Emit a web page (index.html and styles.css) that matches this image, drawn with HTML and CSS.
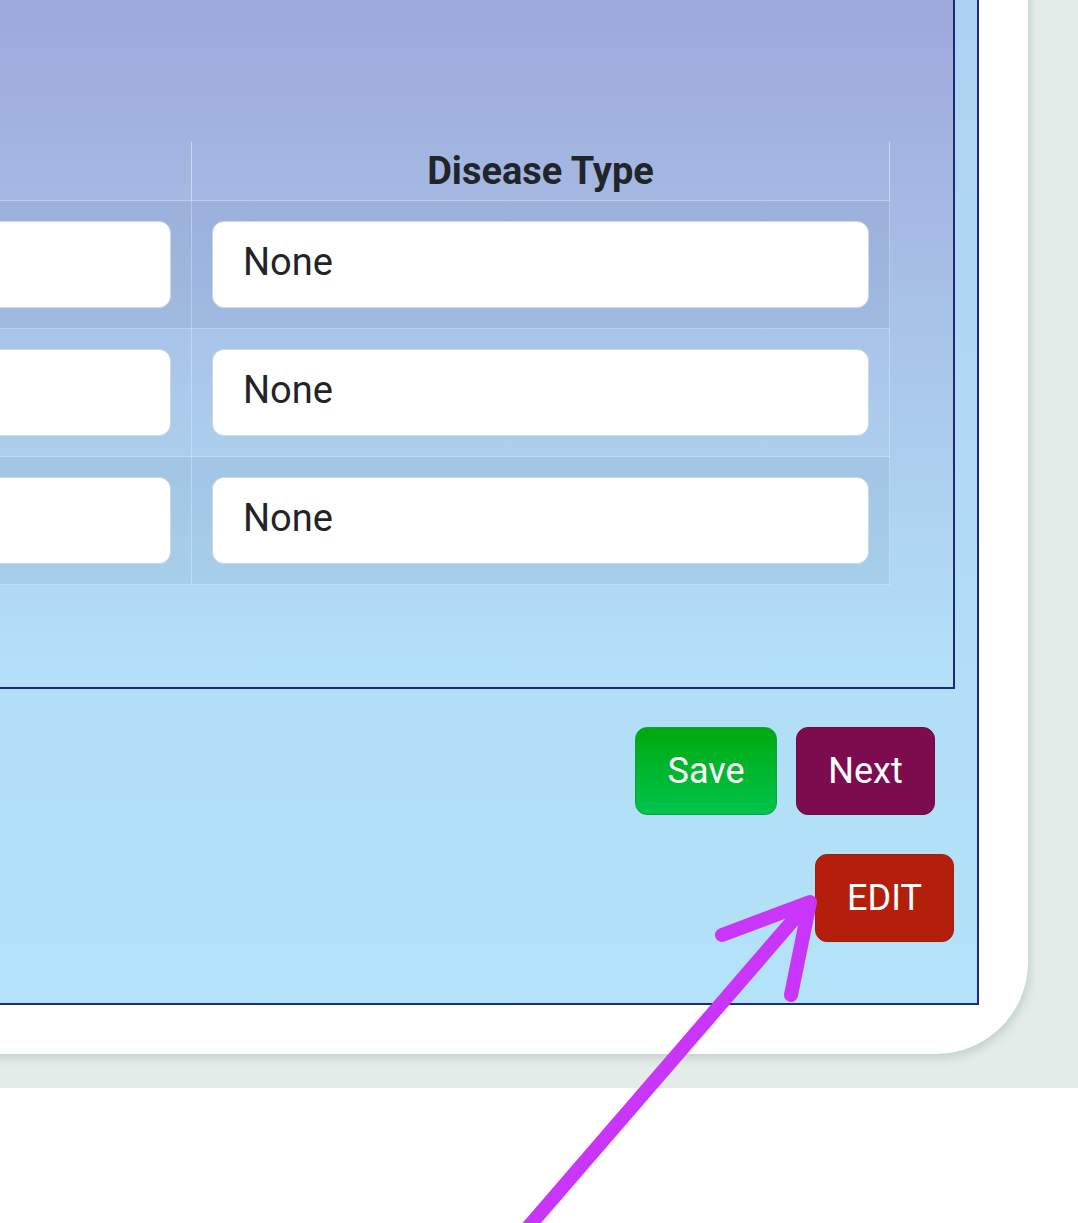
FILE: index.html
```html
<!DOCTYPE html>
<html>
<head>
    <title>Patient Diseases</title>
    <link rel="stylesheet" href="styles.css">
</head>
<body>
    <div class="page">
        <div class="screen">
            <div class="card">
                <div class="outer">
                    <div class="inner">
                        <table class="grid">
                            <colgroup>
                                <col>
                                <col class="col-type">
                            </colgroup>
                            <thead>
                                <tr>
                                    <th></th>
                                    <th>Disease Type</th>
                                </tr>
                            </thead>
                            <tbody>
                                <tr>
                                    <td><input type="text" value="None"></td>
                                    <td><input type="text" value="None"></td>
                                </tr>
                                <tr>
                                    <td><input type="text" value="None"></td>
                                    <td><input type="text" value="None"></td>
                                </tr>
                                <tr>
                                    <td><input type="text" value="None"></td>
                                    <td><input type="text" value="None"></td>
                                </tr>
                            </tbody>
                        </table>
                    </div>

                    <div class="actions">
                        <button class="btn btn-save">Save</button>
                        <button class="btn btn-next">Next</button>
                    </div>
                    <div class="actions actions-edit">
                        <button class="btn btn-edit">EDIT</button>
                    </div>
                </div>
            </div>
        </div>

        <!-- annotation arrow drawn over the screenshot -->
        <svg class="annot" width="1078" height="1223" viewBox="0 0 1078 1223">
            <g fill="none" stroke="#c936fa" stroke-width="14" stroke-linecap="round" stroke-linejoin="round">
                <path d="M524 1232 L808 903"/>
                <path d="M722 935 L810 902 L791 995"/>
            </g>
        </svg>
    </div>
</body>
</html>
```

FILE: styles.css
```css
body {
    margin: 0;
    background-color: #fff;
    font-family: Roboto, "Liberation Sans", Arial, sans-serif;
}

.page {
    position: relative;
    height: 1223px;
    overflow: hidden;
}

.screen {
    height: 1088px;
    overflow: hidden;
    background-color: #e3ece8;
}

.card {
    box-sizing: border-box;
    width: 1628px;
    margin: -200px 0 0 -600px;
    padding: 0 49px 49px 20px;
    background-color: #fff;
    border-radius: 0 0 92px 0;
    box-shadow: 2px 4px 10px rgba(60, 80, 70, 0.18);
}

.outer {
    padding: 20px 22px 61px 22px;
    border: 2px solid #1c2a78;
    background: linear-gradient(to bottom, #aacbef 0%, #aed3f2 20%, #b3e3f8 100%);
}

.inner {
    padding: 318px 63px 102px 63px;
    border: 2px solid #1c2a78;
    background: linear-gradient(to bottom, #9ca4d9 0%, #9fa9db 22%, #a6bde6 50%, #b3e2f8 100%);
}

.grid {
    width: 100%;
    table-layout: fixed;
    border-collapse: collapse;
}

.col-type {
    width: 698px;
}

.grid th {
    height: 42px;
    padding: 8px 10px;
    font-size: 38px;
    line-height: 42px;
    font-weight: bold;
    color: #212529;
    text-align: center;
    border-left: 1px solid rgba(255, 255, 255, 0.45);
    border-right: 1px solid rgba(255, 255, 255, 0.45);
}

.grid td {
    padding: 20px;
    border: 1px solid rgba(255, 255, 255, 0.3);
}

.grid tbody tr:nth-child(odd) td {
    background-color: rgba(20, 50, 110, 0.06);
}

.grid input {
    box-sizing: border-box;
    display: block;
    width: 100%;
    height: 87px;
    padding: 0 30px 5px 30px;
    font-family: Roboto, "Liberation Sans", Arial, sans-serif;
    font-size: 38px;
    color: #212529;
    background-color: #fff;
    border: 1.5px solid #d2d6de;
    border-radius: 12px;
}

.actions {
    display: flex;
    justify-content: flex-end;
    gap: 19px;
    margin-top: 38px;
    padding-right: 20px;
}

.actions-edit {
    margin-top: 39px;
    padding-right: 1px;
}

.btn {
    height: 88px;
    width: 139px;
    padding: 0;
    font-family: Roboto, "Liberation Sans", Arial, sans-serif;
    font-size: 36px;
    color: #fff;
    border: 1px solid transparent;
    border-radius: 12px;
}

.btn-save {
    width: 142px;
    background: linear-gradient(to bottom, #00a90e, #00c44c);
    border-color: #03a83a;
}

.btn-next {
    background-color: #7d0c4f;
    border-color: #6e0a46;
}

.btn-edit {
    background-color: #b41f0c;
    border-color: #a51c0c;
}

.annot {
    position: absolute;
    left: 0;
    top: 0;
    pointer-events: none;
}
```
